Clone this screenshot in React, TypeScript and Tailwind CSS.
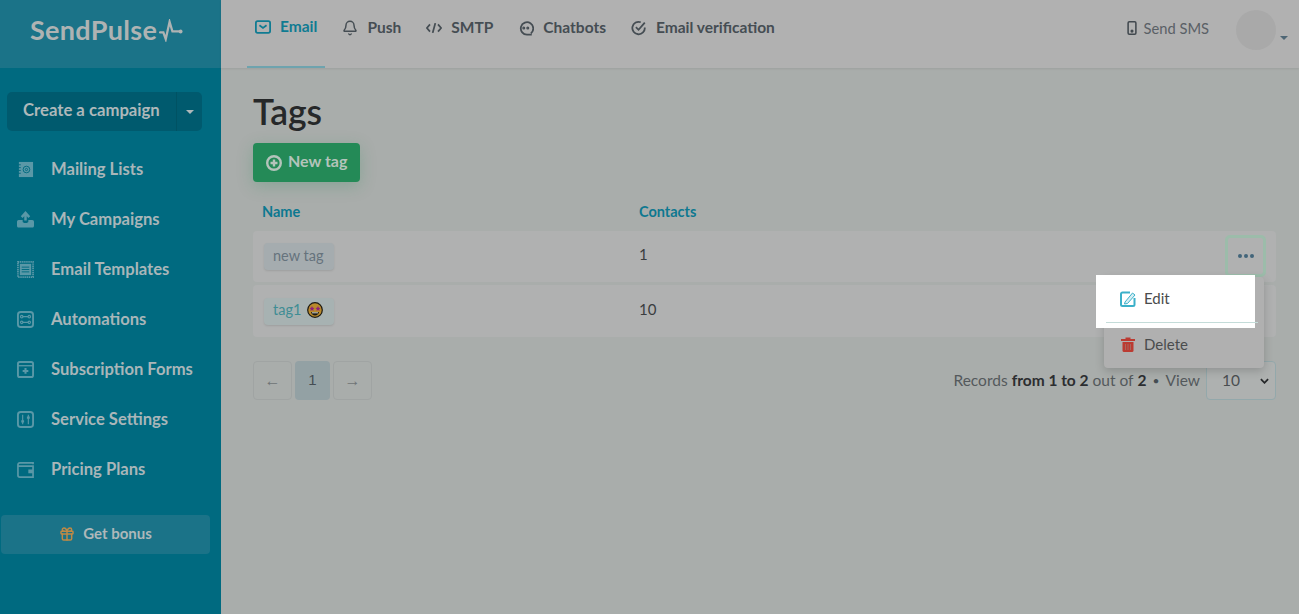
import React from 'react';
import { Bell, Gift } from 'lucide-react';

const font = { fontFamily: 'Lato, "Noto Sans", sans-serif' };

const Icon: React.FC<{ children: React.ReactNode; className?: string }> = ({ children, className }) => (
  <svg viewBox="0 0 18 18" fill="none" stroke="currentColor" strokeWidth="2" className={className}>
    {children}
  </svg>
);

const navItems: { label: string; icon: React.ReactNode }[] = [
  {
    label: 'Mailing Lists',
    icon: (
      <>
        <rect x="2" y="1" width="15" height="16" fill="currentColor" stroke="none" />
        <circle cx="10" cy="9" r="3.5" stroke="#006a80" strokeWidth="1" />
        <circle cx="10" cy="9" r="1.2" stroke="#006a80" strokeWidth="1" />
        <path d="M1 4h3M1 7h3M1 10h3M1 13h3" stroke="#006a80" strokeWidth="1" />
      </>
    ),
  },
  {
    label: 'My Campaigns',
    icon: (
      <>
        <path d="M0 11.500c0-1 .7-2 1.800-2H6v1.500c0 1 1 1.600 3 1.600s3-.6 3-1.600V9.500h4.200c1.100 0 1.800 1 1.800 2v4c0 1.300-.8 2-2 2H2c-1.200 0-2-.7-2-2z" fill="currentColor" stroke="none" />
        <path d="M9 10V3M5 6.500L9 2l4 4.500" strokeWidth="2.600" />
      </>
    ),
  },
  {
    label: 'Email Templates',
    icon: (
      <>
        <rect x="1" y="1" width="16" height="16" strokeDasharray="1.500 .7" strokeWidth="1.800" />
        <rect x="3" y="3" width="12" height="12" fill="currentColor" stroke="none" />
        <path d="M5 6.500h8M5 9h8M5 11.500h8" stroke="#006a80" strokeWidth="1" />
      </>
    ),
  },
  {
    label: 'Automations',
    icon: (
      <>
        <rect x="1" y="1" width="16" height="16" rx="3" />
        <path d="M6 6h6M6 12h6" strokeWidth="1.200" />
        <circle cx="5" cy="6" r="1.300" strokeWidth="1.200" />
        <circle cx="13" cy="6" r="1.300" strokeWidth="1.200" />
        <circle cx="5" cy="12" r="1.300" strokeWidth="1.200" />
        <circle cx="13" cy="12" r="1.300" strokeWidth="1.200" />
      </>
    ),
  },
  {
    label: 'Subscription Forms',
    icon: (
      <>
        <rect x="1" y="1" width="16" height="16" rx="2" />
        <path d="M1 5h16" strokeWidth="1.400" />
        <path d="M9 7.500v6M6 10.500h6" strokeWidth="2.200" />
      </>
    ),
  },
  {
    label: 'Service Settings',
    icon: (
      <>
        <rect x="1" y="1" width="16" height="16" rx="3" />
        <path d="M6 4v10M12 4v10" strokeWidth="1.200" />
        <path d="M4.500 11h3M10.500 7h3" strokeWidth="2.200" />
      </>
    ),
  },
  {
    label: 'Pricing Plans',
    icon: (
      <>
        <path d="M17 3.500V2H3a2 2 0 0 0-2 2v11a2 2 0 0 0 2 2h14V5.500H1" strokeWidth="1.800" />
        <rect x="12" y="9" width="5" height="4" fill="currentColor" stroke="none" />
      </>
    ),
  },
];

const tabs: { label: string; active?: boolean; icon: React.ReactNode }[] = [
  {
    label: 'Email',
    active: true,
    icon: (
      <Icon className="h-4 w-4">
        <rect x="1" y="2.500" width="16" height="13" rx="2" />
        <path d="M5 7l4 3 4-3" />
      </Icon>
    ),
  },
  { label: 'Push', icon: <Bell className="h-4 w-4" strokeWidth={2.200} /> },
  {
    label: 'SMTP',
    icon: (
      <Icon className="h-4 w-4">
        <path d="M4.500 5L1 9l3.500 4M13.500 5L17 9l-3.500 4M10.500 3.500l-3 11" />
      </Icon>
    ),
  },
  {
    label: 'Chatbots',
    icon: (
      <Icon className="h-4 w-4">
        <path d="M14.500 15A7 7 0 1 0 10.500 16.500h5" />
        <circle cx="6.500" cy="9" r=".7" fill="currentColor" />
        <circle cx="11" cy="9" r=".7" fill="currentColor" />
      </Icon>
    ),
  },
  {
    label: 'Email verification',
    icon: (
      <Icon className="h-4 w-4">
        <path d="M15.500 8.500A7 7 0 1 1 11 2.500" />
        <path d="M5.500 8l3 3 7-8" />
      </Icon>
    ),
  },
];

const StarFace = () => (
  <svg viewBox="0 0 16 16" className="h-4 w-4">
    <circle cx="8" cy="8" r="7.300" fill="#b98a2c" stroke="#1d1a12" strokeWidth="1.200" />
    <path d="M2.500 6l1.700-.3L5 4l.8 1.700L7.500 6 6.200 7.200l.3 1.800L5 8.100 3.500 9l.3-1.800zM8.500 6l1.700-.3L11 4l.8 1.700 1.700.3-1.300 1.200.3 1.800L11 8.100 9.500 9l.3-1.800z" fill="#8f1f78" />
    <path d="M4 10h8c-.3 2.300-2 3.500-4 3.500S4.300 12.300 4 10z" fill="#1d1a12" />
    <path d="M5 10.300h6v1H5z" fill="#d8d8d0" />
  </svg>
);

const Row: React.FC<{ chip: React.ReactNode; count: string; chipClass: string; height: string; children?: React.ReactNode }> = ({
  chip,
  count,
  chipClass,
  height,
  children,
}) => (
  <div className={`relative flex items-center rounded-[4px] bg-[#b0b1b1] pl-[11px] ${height}`}>
    <div className="w-[375px]">
      <span className={`inline-flex h-[27px] w-[70px] items-center gap-[6px] rounded-[4px] pb-[2px] pl-[9px] text-[14.500px] shadow-[0_1px_2px_rgba(0,0,0,0.1)] ${chipClass}`}>
        {chip}
      </span>
    </div>
    <span className="pb-[4px] text-[15px] text-[#3a3d3f]">{count}</span>
    {children}
  </div>
);

export default function App() {
  return (
    <div className="flex h-screen overflow-hidden bg-[#a9adab]" style={font}>
      {/* Sidebar */}
      <aside className="flex w-[221px] shrink-0 flex-col bg-[#006a80]">
        <div className="flex h-[68px] items-center bg-[#1b7388] pb-[8px] pl-[30px] text-[#aeb3b3]">
          <span className="text-[27px] font-bold tracking-[0.3px]">SendPulse</span>
          <svg viewBox="0 0 26 24" fill="none" stroke="currentColor" strokeWidth="2.400" strokeLinecap="round" className="ml-[2px] h-[23px] w-[25px]">
            <path d="M1 14h3.500l2.500 7L11 3l3 10h7" />
            <circle cx="22.500" cy="13" r="2" fill="currentColor" stroke="none" />
          </svg>
        </div>

        <div className="mx-[7px] mt-[24px] flex h-[39px] w-[195px] items-center rounded-[5px] bg-[#005a6e] text-[#aeb8ba]">
          <span className="flex-1 pb-px pl-[16px] text-[16.700px] font-bold">Create a campaign</span>
          <span className="flex h-full w-[26px] items-center justify-center border-l border-[#005263]">
            <span className="h-0 w-0 border-x-[4px] border-t-[4px] border-x-transparent border-t-[#aeb8ba]" />
          </span>
        </div>

        <nav className="mt-[13px] flex flex-col">
          {navItems.map(item => (
            <div key={item.label} className="flex h-[50px] items-center pl-[17px] text-[#a9b6b9]">
              <Icon className="h-[17px] w-[17px] shrink-0 text-[#5a98a7]">{item.icon}</Icon>
              <span className="ml-[17px] text-[16.600px] font-bold">{item.label}</span>
            </div>
          ))}
        </nav>

        <div className="ml-px mt-[21px] flex h-[39px] w-[209px] items-center justify-center gap-[8px] rounded-[4px] bg-[#1b7388] pb-[2px] text-[15px] font-bold text-[#aeb8ba]">
          <Gift className="h-4 w-4 text-[#c08a45]" strokeWidth={2.200} />
          Get bonus
        </div>
      </aside>

      <div className="flex min-w-0 flex-1 flex-col">
        {/* Header */}
        <header className="flex h-[68px] shrink-0 items-stretch bg-[#b1b1b1] pl-[26px] pr-[11px] shadow-[0_1px_2px_rgba(0,0,0,0.08)]">
          <div className="flex items-stretch">
            {tabs.map(tab => (
              <div
                key={tab.label}
                className={`mr-[9px] flex items-center gap-[9px] px-[8px] pb-[13px] text-[15.500px] font-bold ${
                  tab.active ? 'border-b-2 border-[#6ea3ae] text-[#0f7b92]' : 'text-[#454d53]'
                }`}
              >
                {tab.icon}
                {tab.label}
              </div>
            ))}
          </div>
          <div className="ml-auto flex items-center">
            <svg viewBox="0 0 12 18" className="mb-[12px] h-[14px] w-[10px] text-[#42494f]" fill="none" stroke="currentColor" strokeWidth="2">
              <rect x="1" y="1" width="10" height="16" rx="1.500" />
              <circle cx="6" cy="13" r="1" fill="currentColor" />
            </svg>
            <span className="mb-[12px] ml-[7px] text-[14.700px] text-[#5a6066]">Send SMS</span>
            <span className="mb-[8px] ml-[27px] h-[40px] w-[40px] rounded-full bg-[#a9a9a9]" />
            <span className="ml-[4px] mt-[8px] h-0 w-0 border-x-[4px] border-t-[4px] border-x-transparent border-t-[#4e6675]" />
          </div>
        </header>

        {/* Content */}
        <main className="pl-[32px] pr-[23px] pt-[25px]">
          <h1 className="text-[35.500px] font-semibold leading-[38px] text-[#262829]">Tags</h1>

          <button className="mt-[12px] flex h-[39px] w-[107px] items-center gap-[6px] rounded-[4px] bg-[#248a57] pb-[3px] pl-[13px] text-[16px] font-bold text-[#b4c4bb] shadow-[0_4px_16px_rgba(36,138,87,0.25)]">
            <svg viewBox="0 0 16 16" className="mt-[3px] h-4 w-4" fill="none" stroke="currentColor" strokeWidth="2.400">
              <circle cx="8" cy="8" r="6.800" />
              <path d="M8 4.500v7M4.500 8h7" />
            </svg>
            New tag
          </button>

          <div className="mt-[20px] flex h-[20px] items-center pl-[9px] text-[14.500px] font-bold text-[#0d7890]">
            <span className="w-[377px]">Name</span>
            <span>Contacts</span>
          </div>

          <div className="mt-[9px] flex flex-col gap-[3px]">
            <Row chip="new tag" chipClass="bg-[#a5acaf] text-[#66737d]" count="1" height="h-[51px]">
              <div className="absolute right-[10px] top-[4px] flex h-[42px] w-[41px] items-center justify-center gap-[2px] rounded-[5px] border-[3px] border-[#9cbcaa]">
                <span className="h-[4px] w-[4px] rounded-full bg-[#42657a]" />
                <span className="h-[4px] w-[4px] rounded-full bg-[#42657a]" />
                <span className="h-[4px] w-[4px] rounded-full bg-[#42657a]" />
              </div>
            </Row>
            <Row chip={<><span>tag1</span><StarFace /></>} chipClass="bg-[#a7b2b2] text-[#3f8d94]" count="10" height="h-[52px]" />
          </div>

          <div className="mt-[24px] flex items-center">
            <div className="flex gap-[3px] font-['Liberation_Sans'] text-[#6f7476]">
              <span className="flex h-[39px] w-[39px] items-center justify-center rounded-[4px] border border-[#a0a4a3] text-[16px]">←</span>
              <span className="flex h-[39px] w-[35px] items-center justify-center rounded-[4px] bg-[#93a1a4] text-[15px] text-[#454d53]">1</span>
              <span className="flex h-[39px] w-[39px] items-center justify-center rounded-[4px] border border-[#a0a4a3] text-[16px]">→</span>
            </div>
            <div className="ml-auto flex items-center text-[15.500px] text-[#54595c]">
              <span>Records</span>
              <b className="ml-[4px] font-bold text-[#2c2e30]">from 1 to 2</b>
              <span className="ml-[4px]">out of</span>
              <b className="ml-[4px] font-bold text-[#2c2e30]">2</b>
              <span className="mx-[6px] text-[12px] text-[#454d53]">•</span>
              <span>View</span>
              <span className="ml-[6px] flex h-[39px] w-[70px] items-center justify-between rounded-[4px] border border-[#93a8ab] bg-[#aeb1b0] pl-[15px] pr-[6px] text-[#4a4e50]">
                10
                <svg viewBox="0 0 10 6" className="h-[6px] w-[9px]" fill="none" stroke="#26282a" strokeWidth="2">
                  <path d="M1 1l4 4 4-4" />
                </svg>
              </span>
            </div>
          </div>
        </main>
      </div>

      {/* Dropdown over the table */}
      <div className="absolute left-[1104px] top-[277px] h-[91px] w-[160px] rounded-[4px] bg-[#b0b0b0] shadow-[0_3px_10px_rgba(0,0,0,0.18)]">
        <div className="h-[46px]" />
        <div className="flex h-[45px] items-center gap-[8px] pb-[3px] pl-[16px] text-[15px] text-[#4a4c4d]">
          <svg viewBox="0 0 16 16" className="h-4 w-4" fill="#bb3b32">
            <path d="M5.500 1.500h5v1.500H15v2H1V3h4.500z" />
            <path d="M2.500 6h11v8.500a1.500 1.500 0 0 1-1.500 1.500H4a1.500 1.500 0 0 1-1.500-1.500z" />
            <path d="M5.500 8v6M8 8v6M10.500 8v6" stroke="#a8675f" strokeWidth="1" />
          </svg>
          Delete
        </div>
      </div>
      <div className="absolute left-[1096px] top-[275px] h-[53px] w-[159px] bg-white pl-[8px]">
        <div className="flex h-[47px] items-center gap-[8px] pl-[16px] text-[15px] text-[#4a4c4d]">
          <svg viewBox="0 0 16 16" className="h-4 w-4" fill="none">
            <path d="M10 1.500H2.500A1.500 1.500 0 0 0 1 3v10.500A1.500 1.500 0 0 0 2.500 15H13a1.500 1.500 0 0 0 1.500-1.500V7" stroke="#3bb0c9" strokeWidth="2" />
            <path d="M5 11l7.500-9 2.500 2L7.500 12.500l-3 .5z" fill="#d5eef4" stroke="#3bb0c9" strokeWidth="1" />
          </svg>
          Edit
        </div>
        <div className="ml-[2px] h-px w-[152px] bg-[#c4dcd9]" />
      </div>
    </div>
  );
}
